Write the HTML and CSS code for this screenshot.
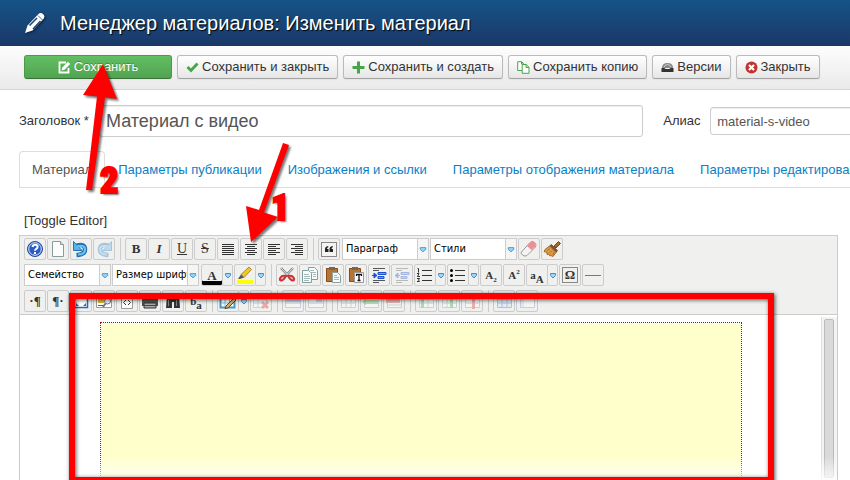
FILE: index.html
```html
<!DOCTYPE html>
<html lang="ru">
<head>
<meta charset="utf-8">
<title>Менеджер материалов: Изменить материал</title>
<link rel="stylesheet" href="styles.css">
</head>
<body>
<header class="header">
  <svg class="header-icon" width="22" height="22" viewBox="0 0 22 22"><path d="M1 21l2.500-7.500L14 2.500q2.500-2.500 5-.5t.5 5L8.500 18.500z" fill="#fff"/><path d="M5.500 13.500L13 6M9 17l7.500-8" stroke="#1a4578" stroke-width="1.500"/><path d="M14 3.500l4.500 4.500" stroke="#1a4578" stroke-width=".8"/></svg>
  <h1>Менеджер материалов: Изменить материал</h1>
</header>
<nav class="subhead">
  <button class="btn btn-save"><svg width="13" height="13" viewBox="0 0 13 13"><path d="M8 1.500H1.500v10h9V7" fill="none" stroke="#fff" stroke-width="1.800"/><path d="M3.500 9.500l.8-3L10 .8l2.200 2.200-5.700 5.700z" fill="#fff"/></svg>Сохранить</button>
  <button class="btn"><svg width="13" height="13" viewBox="0 0 13 13"><path d="M1.500 6l3.500 3.500 6.500-7" fill="none" stroke="#46a546" stroke-width="2.800"/></svg>Сохранить и закрыть</button>
  <button class="btn"><svg width="13" height="13" viewBox="0 0 13 13"><path d="M6.500 .5v12M.5 6.500h12" stroke="#46a546" stroke-width="3"/></svg>Сохранить и создать</button>
  <button class="btn"><svg width="13" height="13" viewBox="0 0 13 13"><path d="M5 9.500H.7V.7h4l2 2v1M4.500.7V3h2.200M5.200 3.500h4l2.800 2.800v6H5.200zM9 3.500v3h3" fill="#fff" stroke="#46a546"/></svg>Сохранить копию</button>
  <button class="btn"><svg width="13" height="13" viewBox="0 0 13 13"><path d="M1 7q0-5 5.500-5T12 7z" fill="#888"/><path d="M3 6q1-2.500 3.500-2.500T10 6" fill="none" stroke="#ccc"/><path d="M.5 7h3l1 1h4l1-1h3v4h-12z" fill="#333"/></svg>Версии</button>
  <button class="btn"><svg width="13" height="13" viewBox="0 0 13 13"><circle cx="6.500" cy="6.500" r="6" fill="#bd362f"/><path d="M4 4l5 5M9 4L4 9" stroke="#fff" stroke-width="2.200"/></svg>Закрыть</button>
</nav>
<main class="content">
  <form class="fields">
    <label for="title">Заголовок *</label>
    <input id="title" class="title-input" value="Материал с видео">
    <label for="alias" class="alias-label">Алиас</label>
    <input id="alias" class="alias-input" value="material-s-video">
  </form>
  <nav class="tabs">
    <a class="active" href="#general">Материал</a>
    <a href="#publishing">Параметры публикации</a>
    <a href="#images">Изображения и ссылки</a>
    <a href="#display">Параметры отображения материала</a>
    <a href="#permissions">Параметры редактирования</a>
  </nav>
  <a class="toggle" href="#toggle">[Toggle Editor]</a>
  <section class="editor">
    <div class="toolbar">
      <div class="row">
        <button class="tool" aria-label="Справка"><svg viewBox="0 0 20 20"><circle cx="10" cy="10" r="7.500" fill="#2a5cc4" stroke="#234a9c"/><circle cx="10" cy="10" r="6.300" fill="none" stroke="#dfe9fb"/><path d="M7.500 8q.3-2.300 2.700-2.300T12.600 8q0 1.200-1.300 1.900T10 11.800M10 13v2" fill="none" stroke="#fff" stroke-width="2"/></svg></button>
        <button class="tool" aria-label="Новый документ"><svg viewBox="0 0 20 20"><path d="M4.500 2.500h8l3 3v12h-11z" fill="#fbfdfd" stroke="#8b9b9b"/><path d="M12.500 2.500v3h3" fill="#dde" stroke="#8b9b9b"/></svg></button>
        <button class="tool" aria-label="Отменить"><svg viewBox="0 0 20 20"><path d="M5 7q9-3 9 3.500 0 5-8.500 5.500" fill="none" stroke="#2372b5" stroke-width="4.500"/><path d="M2.500 2.500v9H11z" fill="#5ab3e6" stroke="#2372b5"/><path d="M6 7.500q8-2 8 3T7 15.500" fill="none" stroke="#6dc0ee" stroke-width="2.200"/></svg></button>
        <button class="tool faded" aria-label="Вернуть"><svg viewBox="0 0 20 20"><path d="M15 7q-9-3-9 3.500 0 5 8.500 5.500" fill="none" stroke="#2372b5" stroke-width="4.500"/><path d="M17.500 2.500v9H9z" fill="#5ab3e6" stroke="#2372b5"/><path d="M14 7.500q-8-2-8 3t7 5" fill="none" stroke="#6dc0ee" stroke-width="2.200"/></svg></button>
        <i class="sep"></i>
        <button class="tool letter"><b>B</b></button>
        <button class="tool letter"><em>I</em></button>
        <button class="tool letter plain"><u>U</u></button>
        <button class="tool letter plain"><s>S</s></button>
        <button class="tool" aria-label="По ширине"><svg viewBox="0 0 20 20"><path d="M4 5.500h12M4 7.500h12M4 9.500h12M4 11.500h12M4 13.500h12M4 15.500h12" stroke="#333"/></svg></button>
        <button class="tool" aria-label="По центру"><svg viewBox="0 0 20 20"><path d="M4 5.500h12M6 7.500h8M4 9.500h12M6 11.500h8M4 13.500h12M6 15.500h8" stroke="#333"/></svg></button>
        <button class="tool" aria-label="По левому краю"><svg viewBox="0 0 20 20"><path d="M4 5.500h12M4 7.500h8M4 9.500h12M4 11.500h8M4 13.500h12M4 15.500h8" stroke="#333"/></svg></button>
        <button class="tool" aria-label="По правому краю"><svg viewBox="0 0 20 20"><path d="M4 5.500h12M8 7.500h8M4 9.500h12M8 11.500h8M4 13.500h12M8 15.500h8" stroke="#333"/></svg></button>
        <i class="sep"></i>
        <button class="tool" aria-label="Цитата"><svg viewBox="0 0 20 20"><rect x="2.500" y="3.500" width="15" height="14" fill="#f4f4f2" stroke="#888"/><path d="M9 7q-3 .5-3 3v3h3.500v-3H8q0-1.500 1.500-2zM13.500 7q-3 .5-3 3v3H14v-3h-1.500q0-1.500 1.500-2z" fill="#222"/></svg></button>
        <span class="drop"><select aria-label="Формат"><option>Параграф</option></select><svg viewBox="0 0 11 20"><path d="M2.500 8.500h6v2L5.500 13l-3-2.500z" fill="#9cd5f7" stroke="#3c94cf"/></svg></span>
        <span class="drop"><select aria-label="Стили"><option>Стили</option></select><svg viewBox="0 0 11 20"><path d="M2.500 8.500h6v2L5.500 13l-3-2.500z" fill="#9cd5f7" stroke="#3c94cf"/></svg></span>
        <button class="tool" aria-label="Ластик"><svg viewBox="0 0 20 20"><path d="M2.500 13L11 3.500q2-2 4.500 0t1 4.500L8 16.500q-2 1.500-4.500-.5t-1-3z" fill="#f5f3f3" stroke="#999"/><path d="M8 7l3.500-3.800q2-1.700 4 0t.8 4.300L12.500 11z" fill="#ec9096"/></svg></button>
        <button class="tool" aria-label="Очистить"><svg viewBox="0 0 20 20"><path d="M12 7l4.500-4.500 2 2L14 9z" fill="#a4672c" stroke="#76471c"/><path d="M9.500 5.500l6 6-1.500 2L7.500 7z" fill="#7d4d32" stroke="#763d18" stroke-width=".7"/><path d="M7.500 7l6.500 6.500-3 4-2-1-1 .5-1-2-2 .5v-2l-3-1 1-2z" fill="#d99b45" stroke="#a36b2b"/><path d="M8 9.500l-3 2M10 11.500l-2 2M12 13l-1 3" stroke="#ae7331"/></svg></button>
      </div>
      <div class="row">
        <span class="drop"><select aria-label="Семейство"><option>Семейство</option></select><svg viewBox="0 0 11 20"><path d="M2.500 8.500h6v2L5.500 13l-3-2.500z" fill="#9cd5f7" stroke="#3c94cf"/></svg></span>
        <span class="drop last"><select aria-label="Размер шрифта"><option>Размер шрифта</option></select><svg viewBox="0 0 11 20"><path d="M2.500 8.500h6v2L5.500 13l-3-2.500z" fill="#9cd5f7" stroke="#3c94cf"/></svg></span>
        <button class="tool split letter color">A</button><button class="arrow" aria-label="Выбрать цвет текста"><svg viewBox="0 0 10 20"><path d="M2.500 8.500h5v2L5 13l-2.500-2.500z" fill="#9cd5f7" stroke="#3c94cf"/></svg></button>
        <button class="tool split" aria-label="Цвет фона"><svg viewBox="0 0 20 20"><path d="M2 15h16v4H2z" fill="#ff0"/><path d="M6 9.500L14 2l2.500 2.500L9 12.500z" fill="#f0c629" stroke="#9c7620" stroke-width=".8"/><path d="M6 9.500l3 3L5 14H3z" fill="#555"/></svg></button><button class="arrow" aria-label="Выбрать цвет фона"><svg viewBox="0 0 10 20"><path d="M2.500 8.500h5v2L5 13l-2.500-2.500z" fill="#9cd5f7" stroke="#3c94cf"/></svg></button>
        <i class="sep"></i>
        <button class="tool" aria-label="Вырезать"><svg viewBox="0 0 20 20"><path d="M4 3l9.500 10M16 3L6.500 13" stroke="#888" stroke-width="2.500"/><path d="M4 3l9.500 10M16 3L6.500 13" stroke="#ddd"/><path d="M9 11q-4-1-5.500 1.500t.5 3q2 .5 5-4.500zM11 11q4-1 5.500 1.500t-.5 3q-2 .5-5-4.500z" fill="#eebbbb" stroke="#c83237" stroke-width="2"/></svg></button>
        <button class="tool" aria-label="Копировать"><svg viewBox="0 0 20 20"><g fill="#f8fcfb" stroke="#7f9e9f"><path d="M8.500 2.500h6l3 3v9h-9z"/><path d="M2.500 5.500h6l3 3v9h-9z"/></g><path d="M10 5.500h4M10 7.500h6M13 9.500h3M13 11.500h3M4 9.500h5M4 11.500h6M4 13.500h6M4 15.500h5" stroke="#a2b9ba"/></svg></button>
        <button class="tool" aria-label="Вставить"><svg viewBox="0 0 20 20"><path d="M3.500 3.500h11v13h-11z" fill="#b97332" stroke="#814b1a"/><path d="M6 2h6v3H6z" fill="#706659"/><path d="M9.500 7.500h5l3 3v7h-8z" fill="#f6fafa" stroke="#8a9f9f"/><path d="M11 10.500h3M11 12.500h5M11 14.500h5" stroke="#a9b8b8"/></svg></button>
        <button class="tool" aria-label="Вставить как текст"><svg viewBox="0 0 20 20"><path d="M3.500 3.500h11v13h-11z" fill="#b97332" stroke="#814b1a"/><path d="M6 2h6v3H6z" fill="#706659"/><path d="M8.500 7.500h9v10h-9z" fill="#fff" stroke="#999"/><path d="M10.500 11V9.500h5V11M13 9.500V16M11.500 15.500h3" fill="none" stroke="#111" stroke-width="1.300"/></svg></button>
        <button class="tool" aria-label="Увеличить отступ"><svg viewBox="0 0 20 20"><path d="M4 3.500h12M4 5.500h6M4 15.500h12M4 17.500h6" stroke="#555"/><path d="M9 7.500h8v2H9zM9 11.500h6v2H9z" fill="#70a1ff" stroke="#1d51cf"/><path d="M3 10.500h2V8l3 2.500L5 13v-2.500" fill="#1d51cf" stroke="#1d51cf"/></svg></button>
        <button class="tool faded" aria-label="Уменьшить отступ"><svg viewBox="0 0 20 20"><path d="M4 3.500h12M4 5.500h6M4 15.500h12M4 17.500h6" stroke="#555"/><path d="M9 7.500h8v2H9zM9 11.500h6v2H9z" fill="#70a1ff" stroke="#1d51cf"/><path d="M8 10.500H6V8l-3 2.500L6 13v-2.500" fill="#1d51cf" stroke="#1d51cf"/></svg></button>
        <button class="tool split" aria-label="Нумерованный список"><svg viewBox="0 0 20 20"><path d="M7 5.500h10M7 10.500h10M7 15.500h10" stroke="#333"/><path d="M2.500 3.500h1v4M2 8.500h2l-1.500 3H5M2 13.500h2.500l-1 1.500 1 1.500H2" fill="none" stroke="#333"/></svg></button><button class="arrow" aria-label="Тип нумерации"><svg viewBox="0 0 10 20"><path d="M2.500 8.500h5v2L5 13l-2.500-2.500z" fill="#9cd5f7" stroke="#3c94cf"/></svg></button>
        <button class="tool split" aria-label="Маркированный список"><svg viewBox="0 0 20 20"><path d="M7 5.500h10M7 10.500h10M7 15.500h10" stroke="#333"/><circle cx="3.500" cy="5.500" r="1.500"/><circle cx="3.500" cy="10.500" r="1.500"/><circle cx="3.500" cy="15.500" r="1.500"/></svg></button><button class="arrow" aria-label="Тип маркера"><svg viewBox="0 0 10 20"><path d="M2.500 8.500h5v2L5 13l-2.500-2.500z" fill="#9cd5f7" stroke="#3c94cf"/></svg></button>
        <button class="tool letter small">A<sub>2</sub></button>
        <button class="tool letter small">A<sup>2</sup></button>
        <button class="tool split letter small"><span class="raised">a</span><span class="lowered">A</span></button><button class="arrow" aria-label="Регистр"><svg viewBox="0 0 10 20"><path d="M2.500 8.500h5v2L5 13l-2.500-2.500z" fill="#9cd5f7" stroke="#3c94cf"/></svg></button>
        <button class="tool letter"><span class="key">Ω</span></button>
        <button class="tool" aria-label="Горизонтальная линия"><svg viewBox="0 0 20 20"><path d="M2 10.500h16" stroke="#777"/></svg></button>
      </div>
      <div class="row">
        <button class="tool letter">·¶</button>
        <button class="tool letter">¶·</button>
        <button class="tool" aria-label="Полный экран"><svg viewBox="0 0 20 20"><path d="M3.500 3.500h13v13h-13z" fill="#fff" stroke="#2468c9" stroke-width="1.500"/><path d="M5 12v3h3zM15 12v3h-3z" fill="#2468c9"/></svg></button>
        <button class="tool" aria-label="Просмотр"><svg viewBox="0 0 20 20"><path d="M2.500 3.500h15v13h-15z" fill="#fff" stroke="#999"/><path d="M4 8h6v4H4z" fill="#e2b432"/><path d="M4 14.500h7" stroke="#559"/><circle cx="13.500" cy="10" r="3" fill="#eef" stroke="#777"/><path d="M11.500 12.500L9 16" stroke="#777" stroke-width="2"/></svg></button>
        <button class="tool" aria-label="Исходный код"><svg viewBox="0 0 20 20"><path d="M4.500 2.500h8l3 3v12h-11z" fill="#fff" stroke="#999"/><path d="M9 9l-2.500 2.500L9 14M11 9l2.500 2.500L11 14" fill="none" stroke="#333"/></svg></button>
        <button class="tool" aria-label="Печать"><svg viewBox="0 0 20 20"><path d="M5 3h10v5H5z" fill="#ccc" stroke="#666"/><path d="M2 8h16v7H2z" fill="#555"/><path d="M4 12h12v5H4z" fill="#aaa" stroke="#333"/><path d="M4 14.500h12" stroke="#444"/></svg></button>
        <button class="tool" aria-label="Найти"><svg viewBox="0 0 20 20"><path d="M4 4h4v4h4V4h4l1 13h-6v-6H9v6H3z" fill="#333"/><path d="M5.500 9v6M13.500 9v6" stroke="#888"/></svg></button>
        <button class="tool letter small"><span class="raised">b</span><span class="lowered">a</span></button>
        <i class="sep"></i>
        <button class="tool split" aria-label="Таблица"><svg viewBox="0 0 20 20"><path d="M2.500 3.500h14v13h-14z" fill="#fff" stroke="#4a99c5" stroke-width="2"/><path d="M3 8h13M3 12h13M7 4v12M11.500 4v12" stroke="#85bbd5"/><path d="M8 15l8-8 2 2-8 8-3 .5z" fill="#d5ab5e" stroke="#654522"/></svg></button><button class="arrow" aria-label="Параметры таблицы"><svg viewBox="0 0 10 20"><path d="M2.500 8.500h5v2L5 13l-2.500-2.500z" fill="#9cd5f7" stroke="#3c94cf"/></svg></button>
        <button class="tool faded" aria-label="Удалить таблицу"><svg viewBox="0 0 20 20"><path d="M2.500 3.500h13v13h-13zM3 8h12M3 12h12M7 4v12" fill="#fff" stroke="#6ba8cc"/><path d="M11 11l6 6M17 11l-6 6" stroke="#d22" stroke-width="2.500"/></svg></button>
        <i class="sep"></i>
        <button class="tool faded" aria-label="Свойства строки"><svg viewBox="0 0 20 20"><path d="M2.500 3.500h15v13h-15zM3 12h14" fill="#fff" stroke="#6b98cc"/><path d="M3 7h14v4H3z" fill="#659bea"/></svg></button>
        <button class="tool faded" aria-label="Свойства ячейки"><svg viewBox="0 0 20 20"><path d="M2.500 3.500h15v13h-15zM3 12h14" fill="#fff" stroke="#6b98cc"/><path d="M10 7h6v4h-6z" fill="#659bea"/></svg></button>
        <i class="sep"></i>
        <button class="tool faded" aria-label="Строка выше"><svg viewBox="0 0 20 20"><path d="M3.500 3.500h14v13h-14zM3 8h14M3 12h14M8 4v12M13 4v12" fill="#fff" stroke="#75a2af"/></svg></button>
        <button class="tool faded" aria-label="Строка ниже"><svg viewBox="0 0 20 20"><path d="M3.500 3.500h14v13h-14z" fill="#fff" stroke="#75a2af"/><path d="M4 9h13v4H4z" fill="#51bd51"/><path d="M1 11l4-3v6z" fill="#292"/></svg></button>
        <button class="tool faded" aria-label="Удалить строку"><svg viewBox="0 0 20 20"><path d="M3.500 3.500h14v13h-14zM4 14h13" fill="#fff" stroke="#75a2af"/><path d="M2 8h14v4H2z" fill="#db4949"/></svg></button>
        <i class="sep"></i>
        <button class="tool faded" aria-label="Столбец слева"><svg viewBox="0 0 20 20"><path d="M3.500 3.500h14v13h-14zM4 8h13M4 12h13M12 4v12" fill="#fff" stroke="#75a2af"/><path d="M5 3h3v14H5z" fill="#3a3"/></svg></button>
        <button class="tool faded" aria-label="Столбец справа"><svg viewBox="0 0 20 20"><path d="M3.500 3.500h14v13h-14zM4 8h13M4 12h13M8 4v12" fill="#fff" stroke="#75a2af"/><path d="M11 3h3v14h-3z" fill="#3a3"/></svg></button>
        <button class="tool faded" aria-label="Удалить столбец"><svg viewBox="0 0 20 20"><path d="M3.500 3.500h14v13h-14zM4 8h13M4 12h13" fill="#fff" stroke="#75a2af"/><path d="M10 3h3v15h-3z" fill="#d33"/></svg></button>
        <i class="sep"></i>
        <button class="tool faded" aria-label="Разделить ячейки"><svg viewBox="0 0 20 20"><path d="M3.500 3.500h14v13h-14z" fill="#d3e3ff" stroke="#346fc9"/><path d="M4 8h13M4 12h13M8 4v12M13 4v12" stroke="#346fc9"/></svg></button>
        <button class="tool faded" aria-label="Объединить ячейки"><svg viewBox="0 0 20 20"><path d="M3.500 3.500h14v13h-14z" fill="#fff" stroke="#6b98cc"/><path d="M4 7h3v9H4z" fill="#c3dafb"/></svg></button>
      </div>
    </div>
    <div class="canvas">
      <div class="page"></div>
      <div class="scrollbar"><div class="thumb"></div></div>
    </div>
    <div class="frame"></div>
  </section>
</main>
<svg class="pointer pointer-save" width="50" height="136" viewBox="0 0 50 136"><path d="M26 4L40 39l-12-1.500L15 130H9l11-93.500L6 35z" fill="#f00"/></svg>
<span class="step step-two">2</span>
<svg class="pointer pointer-align" width="56" height="110" viewBox="0 0 56 110"><path d="M11 101L6 65l13 4L43 2l6 2-25 67.500L38 76z" fill="#f00"/></svg>
<span class="step step-one">1</span>
</body>
</html>
```
FILE: styles.css
```css
* { box-sizing: border-box; }
body {
  margin: 0;
  height: 100vh;
  overflow: hidden;
  display: flex;
  flex-direction: column;
  position: relative;
  font: 13px/18px "Liberation Sans", Arial, sans-serif;
  color: #333;
  background: #fff;
}
button, input, select { font: inherit; color: inherit; margin: 0; }
a { color: #0a80c6; text-decoration: none; }

.header {
  display: flex;
  align-items: center;
  gap: 14px;
  height: 46px;
  padding: 0 24px;
  background: linear-gradient(#165387, #1a3867);
}
.header-icon { filter: drop-shadow(1px 1px 1px #0008); }
.header h1 {
  margin: 0;
  font-size: 20px;
  line-height: 24px;
  font-weight: normal;
  color: #fff;
  text-shadow: 1px 1px 1px #000;
  white-space: nowrap;
}

.subhead {
  display: flex;
  align-items: flex-start;
  gap: 5px;
  height: 44px;
  padding: 9px 24px;
  background: linear-gradient(#fdfdfd, #eaeaea);
  border-bottom: 1px solid #d3d3d3;
}
.btn {
  flex: none;
  display: flex;
  align-items: center;
  justify-content: center;
  gap: 3px;
  height: 24px;
  padding: 0 8px;
  border: 1px solid #bbb;
  border-bottom-color: #a2a2a2;
  border-radius: 3px;
  background: linear-gradient(#fff, #e6e6e6);
  box-shadow: 0 1px 2px #0000000d;
  white-space: nowrap;
}
.btn-save {
  width: 148px;
  color: #fff;
  border-color: #4a9a4a #4a9a4a #387038;
  background: linear-gradient(#62bf62, #51a351);
  text-shadow: 0 -1px 0 #0004;
}

.content {
  flex: 1;
  min-height: 0;
  display: flex;
  flex-direction: column;
  padding-left: 19px;
}
.fields {
  display: flex;
  align-items: center;
  margin-top: 15px;
  white-space: nowrap;
}
.fields label { width: 80px; }
.fields .alias-label { width: 47px; margin-left: 20px; }
.fields input {
  flex: none;
  border: 1px solid #ccc;
  border-radius: 3px;
  background: #fff;
  color: #555;
  box-shadow: inset 0 1px 1px #00000013;
}
.fields .title-input { flex: 1 1 0; min-width: 0; height: 32px; padding: 0 6px; font-size: 18px; }
.fields .alias-input { width: 25%; min-width: 140px; margin-right: -68px; height: 28px; padding: 0 6px; }

.tabs {
  display: flex;
  margin-top: 14px;
  border-bottom: 1px solid #ddd;
  white-space: nowrap;
}
.tabs a {
  flex: none;
  height: 36px;
  padding: 9px 12px;
  border: 1px solid transparent;
  border-bottom: 0;
  border-radius: 4px 4px 0 0;
}
.tabs .active {
  margin-bottom: -1px;
  border-color: #ddd;
  background: #fff;
  color: #555;
}
.toggle { margin: 24px 5px 5px; color: #333; }

.editor {
  flex: 1;
  min-height: 0;
  display: flex;
  flex-direction: column;
  position: relative;
  overflow: hidden;
  margin-right: 12px;
  border: 1px solid #ccc;
  border-bottom: 0;
}
.toolbar {
  display: flex;
  flex-direction: column;
  gap: 4px;
  padding: 2px 4px;
  background: #f0f0ee;
  border-bottom: 1px solid #ccc;
}
.row { display: flex; height: 22px; }
.tool, .arrow {
  flex: none;
  width: 22px;
  height: 22px;
  margin-right: 1px;
  padding: 0;
  border: 1px solid #ccc;
  border-radius: 2px;
  background: transparent;
}
.tool svg, .arrow svg, .drop svg { display: block; height: 20px; }
.tool.split { margin-right: 0; }
.arrow { width: 11px; margin-left: -1px; }
.faded svg { opacity: .35; }
.sep { width: 1px; margin: 0 4px; background: #ccc; }
.letter {
  font: bold 13px/20px "Liberation Serif", serif;
  color: #333;
  text-align: center;
}
.plain { font-weight: normal; font-size: 14px; }
.small { font-size: 11px; }
.small sub, .small sup { font-size: 7px; line-height: 1px; }
.raised { vertical-align: 2px; }
.lowered { vertical-align: -2px; }
.color { line-height: 15px; border-bottom: 1px solid #ccc; box-shadow: inset 0 -4px #000; }
.key {
  display: block;
  height: 16px;
  margin: 2px;
  line-height: 14px;
  border: 1px solid #888;
}
.drop {
  display: flex;
  width: 87px;
  margin: 0 1px;
  border: 1px solid #ccc;
  background: #fff;
}
.drop + .drop { margin-left: 0; }
.drop:first-child { margin-left: 0; }
.drop.last { margin-right: 2px; }
.drop select {
  appearance: none;
  flex: 1;
  min-width: 0;
  padding: 0 0 0 3px;
  border: 0;
  border-right: 1px solid #ccc;
  border-radius: 0;
  background: #fff;
  color: #000;
  font: 11px/20px "DejaVu Sans Condensed", "DejaVu Sans", sans-serif;
  overflow: hidden;
  text-overflow: clip;
}
.drop svg { flex: none; width: 10px; background: #f5f5f4; }

.canvas {
  flex: 1;
  display: flex;
  margin-top: 2px;
  background: #fff;
}
.page {
  flex: 1;
  margin: 5px 79px 0 80px;
  border: 1px dotted #c00;
  border-bottom: 0;
  background: #ffffcc padding-box;
}
.scrollbar {
  width: 16px;
  padding: 2px;
  border-left: 1px solid #ddd;
  background: #f3f3f3;
}
.thumb {
  width: 10px;
  height: 100%;
  border: 1px solid #bbb;
  border-radius: 2px;
  background: #d9d9d9;
}
.editor::after {
  content: "";
  position: absolute;
  inset: auto -1px 0;
  height: 24px;
  background: linear-gradient(#fff0, #fffc);
}
.frame {
  position: absolute;
  z-index: 1;
  inset: 57px 63px -3px 49px;
  border: 6px solid #f00;
  box-shadow: 1px 1px 4px #000a, inset 1px 1px 4px #000a;
}
.pointer { position: absolute; filter: drop-shadow(2px 2px 1px #0008); }
.pointer-save { left: 77px; top: 60px; }
.pointer-align { left: 240px; top: 141px; }
.step {
  position: absolute;
  font: 900 36px/40px "Roboto Condensed", "Open Sans Condensed", Roboto, sans-serif;
  color: #f00;
  -webkit-text-stroke: 2px #f00;
  text-shadow: 2px 2px 2px #0008;
}
.step-two { left: 100px; top: 161px; }
.step-one { left: 271px; top: 188px; }
```
